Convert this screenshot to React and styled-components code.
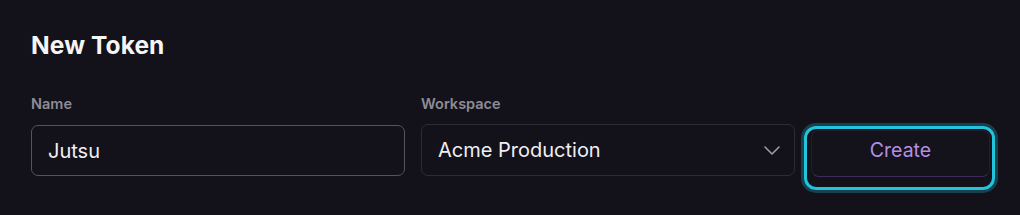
import styled, { createGlobalStyle } from "styled-components";

const GlobalStyle = createGlobalStyle`
  html, body {
    margin: 0;
    background: #13121a;
  }
  body {
    font-family: Inter, "Noto Sans", sans-serif;
    color: #ececf0;
  }
`;

const Panel = styled.section`
  padding: 29px 30px 0 31px;
  height: 215px;
  box-sizing: border-box;
`;

const Title = styled.h2`
  margin: 0 0 34px;
  font-size: 24.5px;
  line-height: 32px;
  font-weight: 700;
  letter-spacing: 0.1px;
  color: #f5f5f7;
`;

const Form = styled.form`
  display: grid;
  grid-template-columns: 374px 374px 179px;
  column-gap: 16px;
  align-items: start;
`;

const Field = styled.div`
  display: flex;
  flex-direction: column;
  gap: ${(p) => p.$gap || 12}px;
`;

const Label = styled.label`
  font-size: 14.5px;
  line-height: 18px;
  font-weight: 600;
  color: #8d8c97;
`;

const Input = styled.input`
  box-sizing: border-box;
  height: 51px;
  padding: 0 16px;
  border: 1px solid #55545e;
  border-radius: 7px;
  background: transparent;
  font: inherit;
  font-size: 20px;
  color: #efeff3;
  outline: none;
`;

const SelectBox = styled.div`
  box-sizing: border-box;
  height: 52px;
  padding: 0 14px 0 16px;
  border: 1px solid #2d2c36;
  border-radius: 7px;
  display: flex;
  align-items: center;
  justify-content: space-between;
  font-size: 20px;
  color: #efeff3;
`;

const Chevron = () => (
  <svg width="16" height="9" viewBox="0 0 16 9" fill="none">
    <path d="M1 1l7 7 7-7" stroke="#9b9aa5" strokeWidth="1.6" strokeLinecap="round" strokeLinejoin="round" />
  </svg>
);

const Actions = styled.div`
  margin-top: 31px;
`;

const FocusRing = styled.div`
  box-sizing: border-box;
  width: 191px;
  height: 64px;
  margin-left: -7px;
  padding: 1px 2px 10px 4px;
  border: 3px solid #22c3dc;
  border-radius: 12px;
  box-shadow: 0 0 0 3px #17414d;
`;

const Button = styled.button`
  box-sizing: border-box;
  width: 179px;
  height: 47px;
  padding: 0 0 7px;
  border: 1px solid #221f2c;
  border-bottom-color: #3e2b5a;
  border-radius: 8px;
  background: #14121b;
  font: inherit;
  font-size: 19.5px;
  color: #b58fe3;
  cursor: pointer;
`;

export default function App() {
  return (
    <>
      <GlobalStyle />
      <Panel>
        <Title>New Token</Title>
        <Form onSubmit={(e) => e.preventDefault()}>
          <Field>
            <Label>Name</Label>
            <Input defaultValue="Jutsu" />
          </Field>
          <Field $gap={11}>
            <Label>Workspace</Label>
            <SelectBox>
              <span>Acme Production</span>
              <Chevron />
            </SelectBox>
          </Field>
          <Actions>
            <FocusRing>
              <Button type="submit">Create</Button>
            </FocusRing>
          </Actions>
        </Form>
      </Panel>
    </>
  );
}
